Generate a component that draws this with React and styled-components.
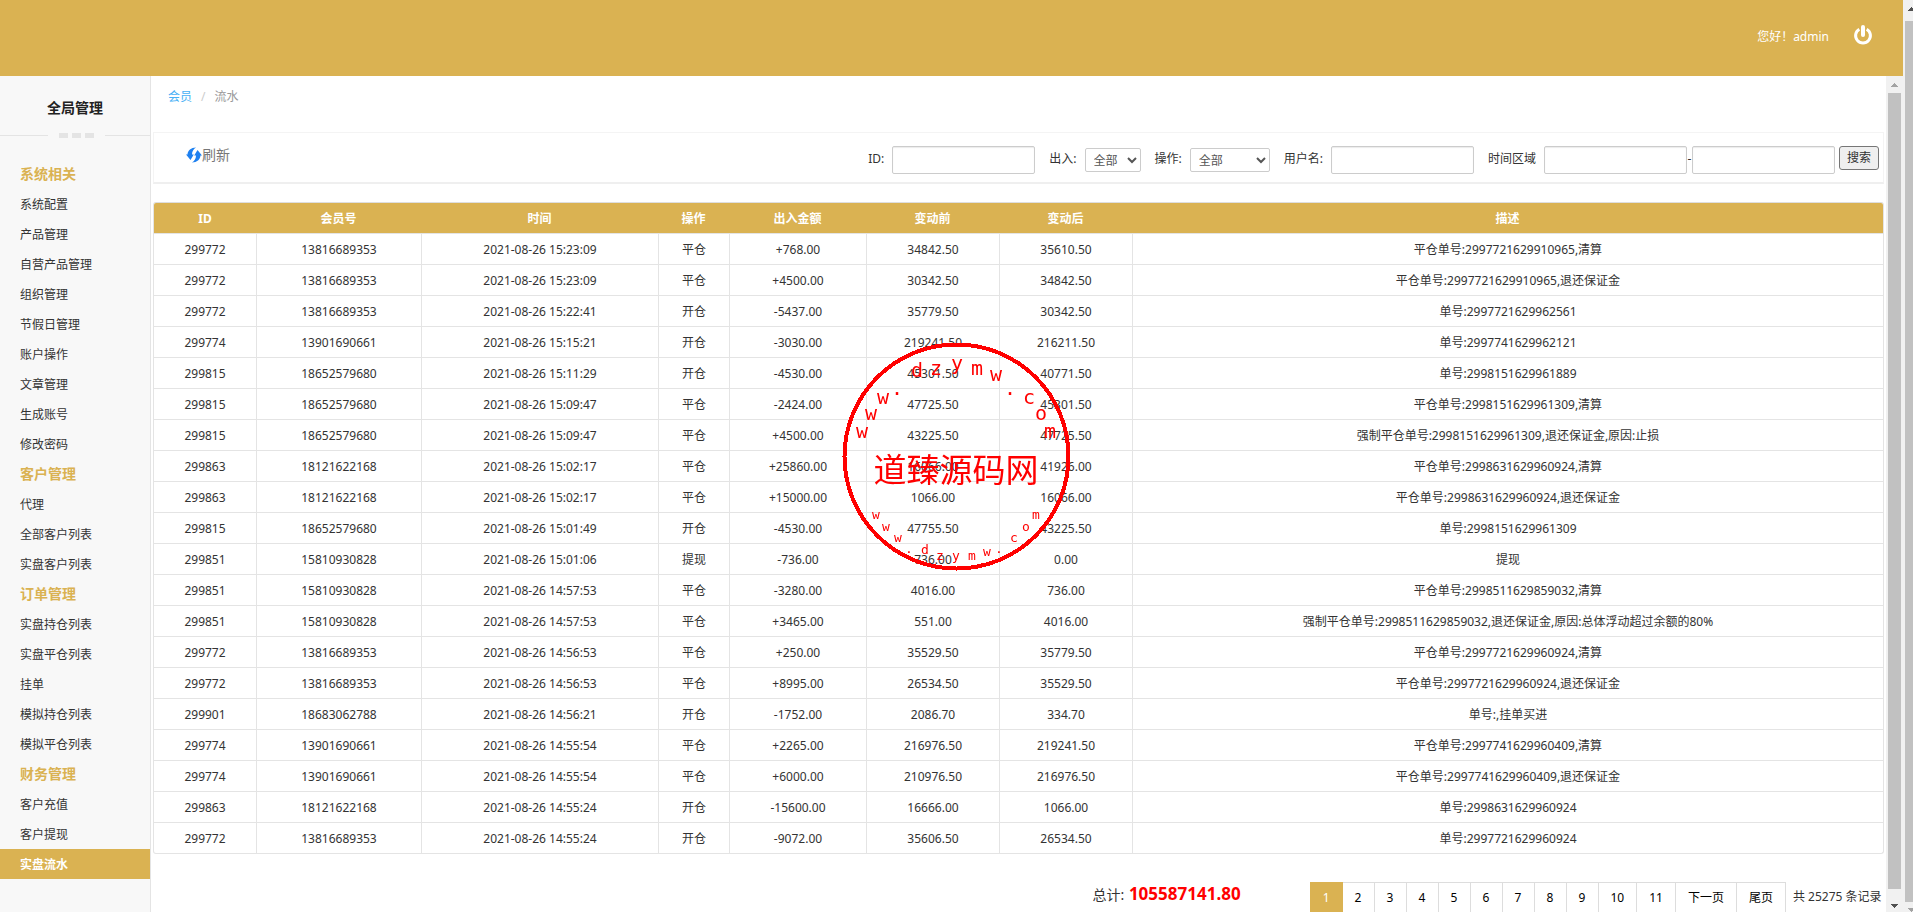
import React from 'react';
import styled, { createGlobalStyle } from 'styled-components';

const GOLD = '#dab252';
const LINE = '#e4e4e4';

const GlobalStyle = createGlobalStyle`
  * {
    box-sizing: border-box;
  }
  body {
    margin: 0;
    overflow: hidden;
    background: #fff;
    color: #333;
    font: 12px/20px 'Noto Sans', 'Noto Sans CJK SC', sans-serif;
  }
  input, select, button {
    font: inherit;
    color: inherit;
  }
  a {
    color: inherit;
    text-decoration: none;
  }
`;

const Screen = styled.div`
  display: flex;
  height: 100vh;
  overflow: hidden;
`;

const Page = styled.div`
  display: flex;
  flex-direction: column;
  flex: 1;
  min-width: 0;
`;

const Header = styled.header`
  display: flex;
  flex: none;
  align-items: center;
  justify-content: flex-end;
  gap: 24px;
  height: 76px;
  padding: 0 30px 2px 0;
  background: ${GOLD};
  color: #fff;
`;

const PowerButton = styled.button`
  display: flex;
  margin-bottom: 4px;
  padding: 0;
  border: 0;
  background: none;
  color: #fff;
`;

const Body = styled.div`
  display: flex;
  flex: 1;
  min-height: 0;
`;

const Sidebar = styled.nav`
  flex: none;
  width: 151px;
  border-right: 1px solid ${LINE};
  background: #f8f8f8;
`;

const SidebarTitle = styled.h1`
  margin: 0;
  padding: 22px 0 15px;
  font-size: 14px;
  line-height: 20px;
  text-align: center;
  color: #222;
`;

const Divider = styled.div`
  display: flex;
  align-items: center;
  gap: 4px;
  margin-bottom: 21px;
`;

const DividerLine = styled.span`
  flex: 1;
  height: 1px;
  background: ${LINE};
  &:first-child {
    flex: 0 0 48px;
    margin-right: 7px;
  }
  &:last-child {
    margin-left: 7px;
  }
`;

const DividerDot = styled.span`
  width: 9px;
  height: 5px;
  background: ${LINE};
`;

const MenuGroup = styled.h2`
  margin: 0;
  padding-left: 20px;
  font-size: 14px;
  line-height: 30px;
  color: ${GOLD};
`;

const MenuLink = styled.a`
  display: block;
  height: 30px;
  padding-left: 20px;
  line-height: 32px;
  color: ${props => (props.$active ? '#fff' : '#333')};
  font-weight: ${props => (props.$active ? 'bold' : 'normal')};
  background: ${props => (props.$active ? GOLD : 'none')};
`;

const Main = styled.main`
  flex: 1;
  min-width: 0;
  padding: 0 2px;
  overflow: hidden;
`;

const Breadcrumb = styled.div`
  display: flex;
  gap: 9px;
  padding: 11px 15px 25px;
  color: #999;
  & > a {
    color: #47b0f5;
  }
  & > span {
    color: #ccc;
  }
`;

const Toolbar = styled.form`
  display: flex;
  align-items: flex-start;
  justify-content: space-between;
  height: 52px;
  margin-bottom: 18px;
  padding: 12px 4px 0 32px;
  border: 1px solid #f4f4f4;
  border-bottom: 2px solid #efefef;
`;

const Refresh = styled.a`
  display: flex;
  align-items: center;
  font-size: 14px;
  color: #777;
`;

const Filters = styled.div`
  display: flex;
  align-items: flex-start;
  padding-top: 1px;
`;

const Field = styled.label`
  display: flex;
  align-items: flex-start;
  gap: 8px;
  margin-right: ${props => props.$gap || 0}px;
  & > span {
    line-height: 26px;
  }
`;

const TextInput = styled.input`
  width: 143px;
  height: 28px;
  padding: 0 6px;
  border: 1px solid #ccc;
  border-radius: 2px;
  background: #fff;
  box-shadow: inset 0 1px 1px rgba(0, 0, 0, 0.08);
`;

const Select = styled.select`
  width: ${props => props.$width}px;
  height: 24px;
  margin-top: 2px;
  padding: 0 4px;
  border: 1px solid #ccc;
  border-radius: 2px;
  background: #fff;
  color: #555;
`;

const Dash = styled.span`
  width: 5px;
  line-height: 26px;
  text-align: center;
`;

const SearchButton = styled.button`
  width: 40px;
  height: 24px;
  margin-left: 4px;
  padding: 0;
  border: 1px solid #767676;
  border-radius: 3px;
  background: #efefef;
`;

const Table = styled.table`
  width: 100%;
  table-layout: fixed;
  border-collapse: separate;
  border-spacing: 0;
  border: 1px solid ${LINE};
  border-top: 1px solid #dedede;
  border-radius: 3px;
  overflow: hidden;
  text-align: center;
`;

const Th = styled.th`
  width: ${props => (props.$width ? `${props.$width}px` : 'auto')};
  height: 30px;
  padding: 2px 0 0;
  background: ${GOLD};
  color: #fff;
`;

const Td = styled.td`
  height: 31px;
  padding: 1px 0 0;
  border-top: 1px solid ${LINE};
  border-left: 1px solid ${LINE};
  &:first-child {
    border-left: 0;
  }
`;

const Footer = styled.div`
  display: flex;
  justify-content: flex-end;
  padding-top: 28px;
`;

const Total = styled.div`
  margin-right: 69px;
  font-size: 14px;
  line-height: 24px;
  & > strong {
    margin-left: 1px;
    font-size: 17px;
    color: #f00;
  }
`;

const Pages = styled.div`
  display: flex;
  margin-right: 7px;
  border-radius: 2px;
`;

const PageLink = styled.a`
  min-width: 32px;
  height: 32px;
  padding: 0 12px;
  border: 1px solid ${props => (props.$active ? GOLD : '#ddd')};
  border-left-width: ${props => (props.$active ? 1 : 0)}px;
  background: ${props => (props.$active ? GOLD : '#fff')};
  color: ${props => (props.$active ? '#fff' : '#000')};
  line-height: 30px;
  text-align: center;
`;

const Records = styled.span`
  min-width: 91px;
  line-height: 30px;
`;

const Scrollbar = styled.div`
  display: flex;
  flex: none;
  flex-direction: column;
  width: ${props => props.$width}px;
  padding-left: 2px;
  overflow: hidden;
  background: #f1f1f1;
  & > svg {
    flex: none;
  }
`;

const Thumb = styled.div`
  flex: 1;
  width: 13px;
  margin-bottom: ${props => props.$bottom}px;
  background: #c1c1c1;
`;

const Stamp = styled.svg`
  position: fixed;
  top: 50%;
  left: 50%;
  width: 230px;
  height: 230px;
  margin: -115px 0 0 -115px;
  fill: #f00;
  font-family: 'Noto Sans CJK SC', sans-serif;
  text-anchor: middle;
  pointer-events: none;
`;

const Letter = styled.text`
  font-family: 'DejaVu Sans Mono', monospace;
  font-size: ${props => props.$size}px;
`;

const menu = [
  { title: '系统相关', items: ['系统配置', '产品管理', '自营产品管理', '组织管理', '节假日管理', '账户操作', '文章管理', '生成账号', '修改密码'] },
  { title: '客户管理', items: ['代理', '全部客户列表', '实盘客户列表'] },
  { title: '订单管理', items: ['实盘持仓列表', '实盘平仓列表', '挂单', '模拟持仓列表', '模拟平仓列表'] },
  { title: '财务管理', items: ['客户充值', '客户提现', '实盘流水'] }
];

const columns = [
  ['ID', 102],
  ['会员号', 165],
  ['时间', 237],
  ['操作', 71],
  ['出入金额', 137],
  ['变动前', 133],
  ['变动后', 133],
  ['描述']
];

const rows = [
  ['299772', '13816689353', '2021-08-26 15:23:09', '平仓', '+768.00', '34842.50', '35610.50', '平仓单号:2997721629910965,清算'],
  ['299772', '13816689353', '2021-08-26 15:23:09', '平仓', '+4500.00', '30342.50', '34842.50', '平仓单号:2997721629910965,退还保证金'],
  ['299772', '13816689353', '2021-08-26 15:22:41', '开仓', '-5437.00', '35779.50', '30342.50', '单号:2997721629962561'],
  ['299774', '13901690661', '2021-08-26 15:15:21', '开仓', '-3030.00', '219241.50', '216211.50', '单号:2997741629962121'],
  ['299815', '18652579680', '2021-08-26 15:11:29', '开仓', '-4530.00', '45301.50', '40771.50', '单号:2998151629961889'],
  ['299815', '18652579680', '2021-08-26 15:09:47', '平仓', '-2424.00', '47725.50', '45301.50', '平仓单号:2998151629961309,清算'],
  ['299815', '18652579680', '2021-08-26 15:09:47', '平仓', '+4500.00', '43225.50', '47725.50', '强制平仓单号:2998151629961309,退还保证金,原因:止损'],
  ['299863', '18121622168', '2021-08-26 15:02:17', '平仓', '+25860.00', '16066.00', '41926.00', '平仓单号:2998631629960924,清算'],
  ['299863', '18121622168', '2021-08-26 15:02:17', '平仓', '+15000.00', '1066.00', '16066.00', '平仓单号:2998631629960924,退还保证金'],
  ['299815', '18652579680', '2021-08-26 15:01:49', '开仓', '-4530.00', '47755.50', '43225.50', '单号:2998151629961309'],
  ['299851', '15810930828', '2021-08-26 15:01:06', '提现', '-736.00', '736.00', '0.00', '提现'],
  ['299851', '15810930828', '2021-08-26 14:57:53', '平仓', '-3280.00', '4016.00', '736.00', '平仓单号:2998511629859032,清算'],
  ['299851', '15810930828', '2021-08-26 14:57:53', '平仓', '+3465.00', '551.00', '4016.00', '强制平仓单号:2998511629859032,退还保证金,原因:总体浮动超过余额的80%'],
  ['299772', '13816689353', '2021-08-26 14:56:53', '平仓', '+250.00', '35529.50', '35779.50', '平仓单号:2997721629960924,清算'],
  ['299772', '13816689353', '2021-08-26 14:56:53', '平仓', '+8995.00', '26534.50', '35529.50', '平仓单号:2997721629960924,退还保证金'],
  ['299901', '18683062788', '2021-08-26 14:56:21', '开仓', '-1752.00', '2086.70', '334.70', '单号:,挂单买进'],
  ['299774', '13901690661', '2021-08-26 14:55:54', '平仓', '+2265.00', '216976.50', '219241.50', '平仓单号:2997741629960409,清算'],
  ['299774', '13901690661', '2021-08-26 14:55:54', '平仓', '+6000.00', '210976.50', '216976.50', '平仓单号:2997741629960409,退还保证金'],
  ['299863', '18121622168', '2021-08-26 14:55:24', '开仓', '-15600.00', '16666.00', '1066.00', '单号:2998631629960924'],
  ['299772', '13816689353', '2021-08-26 14:55:24', '开仓', '-9072.00', '35606.50', '26534.50', '单号:2997721629960924']
];

const pages = ['1', '2', '3', '4', '5', '6', '7', '8', '9', '10', '11', '下一页', '尾页'];

// [letter, x, baseline]
const upperArc = [
  ['w', 20, 97], ['w', 29, 79], ['w', 41, 63], ['.', 55, 54],
  ['d', 75, 36], ['z', 94, 34], ['y', 115, 29], ['m', 135, 34], ['w', 154, 40],
  ['.', 168, 54], ['c', 187, 63], ['o', 199, 79], ['m', 208, 97]
];

const lowerArc = [
  ['w', 34, 178], ['w', 44, 190], ['w', 56, 201], ['.', 67, 212],
  ['d', 83, 213], ['z', 98, 219], ['y', 114, 219], ['m', 130, 219], ['w', 145, 215],
  ['.', 157, 212], ['c', 172, 201], ['o', 184, 190], ['m', 194, 178]
];

const Arrow = ({ down, height, top, color }) => (
  <svg width="13" height={height} viewBox={`0 0 13 ${height}`} aria-hidden="true">
    <path
      fill={color}
      shapeRendering="crispEdges"
      d={down ? `M3 ${top}h7l-3.5 4z` : `M3 ${top + 4}h7l-3.5 -4z`}
    />
  </svg>
);

const Watermark = () => (
  <Stamp viewBox="0 0 230 230">
    <circle cx="114.5" cy="115.500" r="112" fill="none" stroke="#f00" strokeWidth="4" shapeRendering="crispEdges" />
    {upperArc.map(([letter, x, y], i) => (
      <Letter key={i} x={x} y={y} $size={20}>{letter}</Letter>
    ))}
    <text x="114" y="141" fontSize="33">道臻源码网</text>
    {lowerArc.map(([letter, x, y], i) => (
      <Letter key={i} x={x} y={y} $size={13}>{letter}</Letter>
    ))}
  </Stamp>
);

const App = () => (
  <Screen>
    <GlobalStyle />
    <Page>
      <Header>
        <span>您好！admin</span>
        <PowerButton type="button" aria-label="退出">
          <svg width="20" height="20" viewBox="0 0 20 20" fill="none" stroke="currentColor" strokeWidth="3">
            <path d="M6.3 4.2a7.4 7.4 0 1 0 7.4 0" />
            <path d="M10 2v8" strokeWidth="4" strokeLinecap="round" />
          </svg>
        </PowerButton>
      </Header>
      <Body>
        <Sidebar>
          <SidebarTitle>全局管理</SidebarTitle>
          <Divider>
            <DividerLine />
            <DividerDot />
            <DividerDot />
            <DividerDot />
            <DividerLine />
          </Divider>
          {menu.map(group => (
            <React.Fragment key={group.title}>
              <MenuGroup>{group.title}</MenuGroup>
              {group.items.map(item => (
                <MenuLink key={item} href="#" $active={item === '实盘流水'}>
                  {item}
                </MenuLink>
              ))}
            </React.Fragment>
          ))}
        </Sidebar>
        <Main>
          <Breadcrumb>
            <a href="#">会员</a>
            <span>/</span>
            流水
          </Breadcrumb>
          <Toolbar>
            <Refresh href="#">
              <svg width="16" height="16" viewBox="0 0 16 16" fill="#1e80f0" aria-hidden="true">
                <path d="M10 .5C5 .5 1.800 3.500 1.500 7.500H0l4.500 5.500L7.800 7.500H6C6 4.500 7.500 2 10 .5z" />
                <path d="M6 15.500c5 0 8.200-3 8.500-7H16l-4.500-5.500L8.200 8.500H10c0 3-1.500 5.500-4 7z" />
              </svg>
              刷新
            </Refresh>
            <Filters>
              <Field $gap={14}>
                <span>ID:</span>
                <TextInput />
              </Field>
              <Field $gap={14}>
                <span>出入:</span>
                <Select $width={56}>
                  <option>全部</option>
                </Select>
              </Field>
              <Field $gap={14}>
                <span>操作:</span>
                <Select $width={80}>
                  <option>全部</option>
                </Select>
              </Field>
              <Field $gap={14}>
                <span>用户名:</span>
                <TextInput />
              </Field>
              <Field>
                <span>时间区域</span>
                <TextInput />
              </Field>
              <Dash>-</Dash>
              <TextInput aria-label="结束时间" />
              <SearchButton type="button">搜索</SearchButton>
            </Filters>
          </Toolbar>
          <Table>
            <thead>
              <tr>
                {columns.map(([name, width]) => (
                  <Th key={name} $width={width}>{name}</Th>
                ))}
              </tr>
            </thead>
            <tbody>
              {rows.map((row, i) => (
                <tr key={i}>
                  {row.map((cell, j) => (
                    <Td key={j}>{cell}</Td>
                  ))}
                </tr>
              ))}
            </tbody>
          </Table>
          <Footer>
            <Total>
              总计: <strong>105587141.80</strong>
            </Total>
            <Pages>
              {pages.map(page => (
                <PageLink key={page} href="#" $active={page === '1'}>{page}</PageLink>
              ))}
            </Pages>
            <Records>共 25275 条记录</Records>
          </Footer>
        </Main>
        <Scrollbar $width={17}>
          <Arrow height={17} top={7} color="#a3a3a3" />
          <Thumb $bottom={6} />
          <Arrow down height={17} top={9} color="#505050" />
        </Scrollbar>
      </Body>
    </Page>
    <Scrollbar $width={10}>
      <Arrow height={21} top={7} color="#505050" />
      <Thumb $bottom={0} />
      <Arrow down height={10} top={6} color="#a3a3a3" />
    </Scrollbar>
    <Watermark />
  </Screen>
);

export default App;
